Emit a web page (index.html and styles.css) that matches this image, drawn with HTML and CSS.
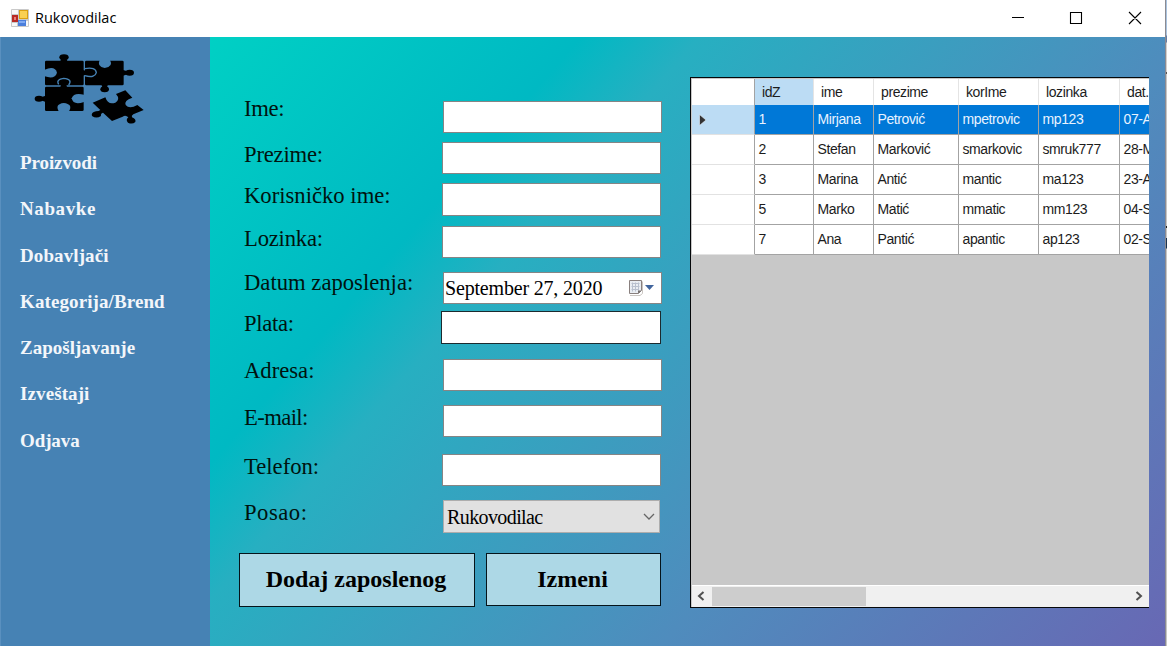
FILE: index.html
```html
<!DOCTYPE html>
<html lang="sr">
<head>
<meta charset="utf-8">
<title>Rukovodilac</title>
<link rel="stylesheet" href="styles.css">
</head>
<body>
<div class="desktop">
  <div class="window">
    <header class="titlebar">
      <svg class="app-icon" viewBox="0 0 18 18" width="18" height="18">
        <rect width="18" height="18" rx="1" fill="#c9c9c9"/>
        <path d="M1 1h6v4H1zM1 14h5v3H1zM15 12h2v5h-2z" fill="#f8f8f8"/>
        <rect x="8" y="1" width="9" height="9" fill="#dba012"/><rect x="9" y="2" width="7" height="7" fill="#fad052"/>
        <rect x="1" y="6" width="6" height="7" fill="#b92a24"/><rect x="3" y="8" width="2" height="3" fill="#e98178"/>
        <rect x="7" y="11" width="8" height="6" fill="#4b7fdc"/><rect x="8" y="12" width="6" height="2" fill="#80aaf2"/>
      </svg>
      <span class="title">Rukovodilac</span>
      <svg class="controls" viewBox="0 0 130 20" width="130" height="20" fill="none" stroke="#000" stroke-width="1.1">
        <path d="M0 8.500h12M58.500 3.500h11v11h-11zM117 3l12 12M129 3l-12 12"/>
      </svg>
    </header>
    <main class="content">
      <aside class="sidebar">
        <svg class="logo" viewBox="99 156 342 222" width="114" height="74">
          <g fill="#000">
            <rect x="135" y="182" width="116" height="74" rx="4"/>
            <ellipse cx="192" cy="172" rx="14" ry="9"/><path d="M184 174h15l3 10h-21z"/>
            <rect x="255" y="182" width="116" height="74" rx="4"/>
            <ellipse cx="389" cy="218" rx="13" ry="9"/><path d="M369 210l14 4v9l-14 4z"/>
            <ellipse cx="314" cy="268" rx="13" ry="9"/><path d="M304 253h20l-4 12h-12z"/>
            <rect x="135" y="260" width="116" height="73" rx="4"/>
            <ellipse cx="117" cy="296" rx="13" ry="9"/><path d="M137 287l-14 5v9l14 5z"/>
            <path d="M278 308l38-16q8 24 30 16 16-10 2-26l28-11 21 22q-26 9-20 22 11 14 35 0l19 15-31 13q-7 4-4 9 13 5 10 14-9 8-22 2-8-8 1-16-8-8-17-2l-32 13-27-25q-8 3-6 10-14 9-27 0-4-10 12-14 9 0 13-4z"/>
          </g>
          <g fill="#4682b4">
            <path d="M134 209q31-13 37 9-6 21-37 11z"/>
            <path d="M299 180q-9 20 15 24 27-4 16-24z"/>
            <path d="M252 284q-31-8-37 11 4 22 37 11z"/>
            <path d="M176 334q-12-22 15-25 29 3 16 25z"/>
          </g>
          <path d="M176 253q-9-15 15-18 28 3 15 20M254 206q33-6 35 12-4 17-35 9" fill="none" stroke="#4682b4" stroke-width="4"/>
          <ellipse cx="191" cy="247" rx="13" ry="8"/><path d="M184 249h14l3 13h-20zM248 210l15 4v8l-15 5z"/><ellipse cx="270" cy="218" rx="13" ry="8"/>
        </svg>
        <nav class="menu">
          <a class="tight">Proizvodi</a><a class="loose">Nabavke</a><a>Dobavljači</a><a>Kategorija/Brend</a><a class="snug">Zapošljavanje</a><a>Izveštaji</a><a class="tight">Odjava</a>
        </nav>
      </aside>
      <section class="form">
        <div class="fields">
          <div class="labels">
            <label class="ime">Ime:</label><label class="prezime">Prezime:</label><label class="korisnik">Korisničko ime:</label><label class="lozinka">Lozinka:</label><label class="datum">Datum zaposlenja:</label><label class="plata">Plata:</label><label class="adresa">Adresa:</label><label class="email">E-mail:</label><label class="telefon">Telefon:</label><label class="posao">Posao:</label>
          </div>
          <div class="inputs">
            <div class="box in"></div>
            <div class="box gap9"></div>
            <div class="box gap9 tall"></div>
            <div class="box gap10"></div>
            <div class="box in gap14 date"><span>September 27, 2020</span>
              <svg viewBox="0 0 26 18" width="26" height="18">
                <path d="M2 16.500h10l2.500-2v-12" fill="none" stroke="#c9c5c1"/>
                <path d="M1.500 1.500h12v10l-3 3h-9z" fill="#e9edf2" stroke="#89807e"/>
                <path d="M3.500 4.500h8M3.500 7.500h8M3.500 10.500h7M4.500 3.500v9M7.500 3.500v9M10.500 3.500v8" stroke="#b8c0ce"/>
                <path d="M10 14.500v-3h3.500z" fill="#77706f"/><path d="M17 6h9l-4.500 5z" fill="#41659d"/>
              </svg>
            </div>
            <div class="box gap7 active"></div>
            <div class="box in gap15"></div>
            <div class="box in gap14"></div>
            <div class="box gap17"></div>
            <div class="box in gap14 select"><span>Rukovodilac</span>
              <svg viewBox="0 0 12 8" width="12" height="8"><path d="M1 1l5 5 5-5" fill="none" stroke="#666" stroke-width="1.300"/></svg>
            </div>
          </div>
        </div>
        <div class="buttons"><button class="add">Dodaj zaposlenog</button><button class="edit">Izmeni</button></div>
      </section>
      <section class="data">
        <div class="grid">
          <div class="row head"><b></b><span class="hot">idZ</span><span>ime</span><span>prezime</span><span>korIme</span><span>lozinka</span><span>dat.</span></div>
          <div class="row selected"><b><svg viewBox="0 0 8 12" width="8" height="12"><path d="M.5 .5v11l6.500-5.500z" fill="#333" stroke="#e9f3fb" stroke-width=".6"/></svg></b><span>1</span><span>Mirjana</span><span>Petrović</span><span>mpetrovic</span><span>mp123</span><span>07-A</span></div>
          <div class="row"><b></b><span>2</span><span>Stefan</span><span>Marković</span><span>smarkovic</span><span>smruk777</span><span>28-M</span></div>
          <div class="row"><b></b><span>3</span><span>Marina</span><span>Antić</span><span>mantic</span><span>ma123</span><span>23-A</span></div>
          <div class="row"><b></b><span>5</span><span>Marko</span><span>Matić</span><span>mmatic</span><span>mm123</span><span>04-S</span></div>
          <div class="row"><b></b><span>7</span><span>Ana</span><span>Pantić</span><span>apantic</span><span>ap123</span><span>02-S</span></div>
          <div class="scrollbar">
            <svg viewBox="0 0 8 10" width="8" height="10"><path d="M6.500 1L2 5l4.500 4" fill="none" stroke="#505050" stroke-width="2"/></svg>
            <i class="thumb"></i>
            <svg class="right" viewBox="0 0 8 10" width="8" height="10"><path d="M1.500 1L6 5 1.500 9" fill="none" stroke="#505050" stroke-width="2"/></svg>
          </div>
        </div>
      </section>
    </main>
  </div>
  <div class="behind"></div>
</div>
</body>
</html>
```
FILE: styles.css
```css
* { box-sizing: border-box; }
body { margin: 0; overflow: hidden; }
.desktop { display: flex; width: 1167px; height: 646px; }
.window { width: 1165px; height: 646px; display: flex; flex-direction: column; }
.behind { width: 2px; border-left: 1px solid #8b8b92; background: linear-gradient(#a9c3df 0 35px, #667da3 36px 42px, #d3d0cd 43px 72px, #555 72px 74px, #c6c6c6 74px 226px, #222 226px 228px, #c6c6c6 228px 238px, #1b3350 238px 248px, #c6c6c6 249px); }

.titlebar { height: 37px; flex: none; display: flex; align-items: center; padding: 0 23px 2px 11px; background: #fff; }
.title { margin-left: 6px; font: 14.5px/20px "Open Sans", sans-serif; letter-spacing: 0; color: #000; }
.controls { margin-left: auto; margin-top: 2px; }

.content { flex: 1; display: flex; background: #4682b4; }
.sidebar { width: 210px; flex: none; padding-top: 15px; border-left: 1px solid #5a90bf; }
.logo { display: block; margin-left: 32px; }
.menu { display: flex; flex-direction: column; padding: 14px 0 0 19px; }
.menu a { height: 46.3px; line-height: 46px; color: #f3f6fa; font-family: "Liberation Serif", serif; font-weight: bold; font-size: 19px; letter-spacing: .1px; }
.menu .tight { letter-spacing: -.1px; }
.menu .snug { letter-spacing: 0; }
.menu .loose { letter-spacing: .6px; }

.form, .data { background-image: linear-gradient(131deg, #00d0c4 0%, #00b9c3 25%, #27afc1 33%, #4f8cbd 66%, #6868b4 100%); background-size: 955px 609px; }
.form { width: 480px; flex: none; font-family: "Liberation Serif", serif; }
.data { flex: 1; padding-top: 40px; background-position: -480px 0; }

.fields { display: flex; height: 516px; padding-left: 34px; }
.labels { width: 198px; display: flex; flex-direction: column; padding-top: 59px; color: #00130f; font-size: 22.67px; }
.labels label { line-height: 26px; height: 26px; margin-bottom: 20px; white-space: nowrap; }
.labels .ime { letter-spacing: -.3px; }
.labels .prezime { margin-bottom: 15px; letter-spacing: -.2px; }
.labels .korisnik { margin-bottom: 17px; }
.labels .lozinka { margin-bottom: 18px; letter-spacing: -.2px; }
.labels .datum { margin-bottom: 15px; }
.labels .plata { margin-bottom: 21px; letter-spacing: -.3px; }
.labels .adresa { margin-bottom: 21px; }
.labels .email { margin-bottom: 23px; letter-spacing: -.6px; }
.labels .telefon { margin-bottom: 20px; }
.labels .posao { letter-spacing: .5px; }
.inputs { padding-top: 64px; }
.box { width: 219px; height: 32px; background: #fff; border: 1px solid #858585; }
.in { margin-left: 1px; }
.tall { height: 33px; }
.gap7 { margin-top: 7px; }
.gap9 { margin-top: 9px; }
.gap10 { margin-top: 10px; }
.gap14 { margin-top: 14px; }
.gap15 { margin-top: 15px; }
.gap17 { margin-top: 17px; }
.active { width: 220px; height: 33px; margin-left: -1px; border-color: #1c2a2e; }
.date, .select { display: flex; align-items: center; justify-content: space-between; font-size: 20px; color: #000; }
.date { padding: 0 7px 0 1px; letter-spacing: -.18px; }
.select { width: 217px; height: 33px; padding: 1px 4px 0 3px; background: #e1e1e1; border-color: #adadad; letter-spacing: -.6px; }

.buttons { display: flex; gap: 11px; align-items: flex-start; padding-left: 29px; }
.buttons button { height: 54px; padding: 0 2px 2px 0; background: #add8e6; border: 1px solid #05141a; font-family: "Liberation Serif", serif; font-weight: bold; font-size: 24px; color: #000; }
.buttons .add { width: 236px; }
.buttons .edit { width: 175px; height: 53px; padding: 0 2px 0 0; }

.grid { width: 459px; height: 531px; display: flex; flex-direction: column; overflow: hidden; padding: 1px 0 0 1px; background: #c8c8c8; border: solid #05080a; border-width: 1px 0 1px 1px; font: 14px/29px "Liberation Sans", Arial, sans-serif; letter-spacing: -.4px; color: #1c1c1c; }
.row { display: grid; grid-template-columns: 63px 59px 60px 85px 80px 81px 29px; height: 30px; flex: none; background: #fff; }
.row b, .row span { border-right: 1px solid #a3a3a3; border-bottom: 1px solid #a3a3a3; white-space: nowrap; }
.row span { padding-left: 3.500px; }
.row span:last-child { border-right: 0; overflow: hidden; }
.row b { border-bottom-color: #e2e2e2; display: flex; align-items: center; padding-left: 7px; }
.head { height: 26px; line-height: 26px; }
.head b, .head span { border-bottom-color: #a3a3a3; border-right-color: #e4e4e4; }
.head b { border-right-color: #a3a3a3; }
.head span { padding-left: 7px; }
.head .hot { background: #bcdcf4; }
.selected { color: #e8f3ff; }
.selected b { background: #bcdcf4; }
.row b svg { flex: none; }
.selected span { background: #0078d7; }
.scrollbar { height: 22px; flex: none; margin-top: auto; border-top: 1px solid #fff; background: #f0f0f0; display: flex; align-items: center; padding: 0 6px 1px 5px; }
.thumb { width: 154px; height: 19px; margin-left: 7px; background: #cdcdcd; }
.right { margin-left: auto; }
```
